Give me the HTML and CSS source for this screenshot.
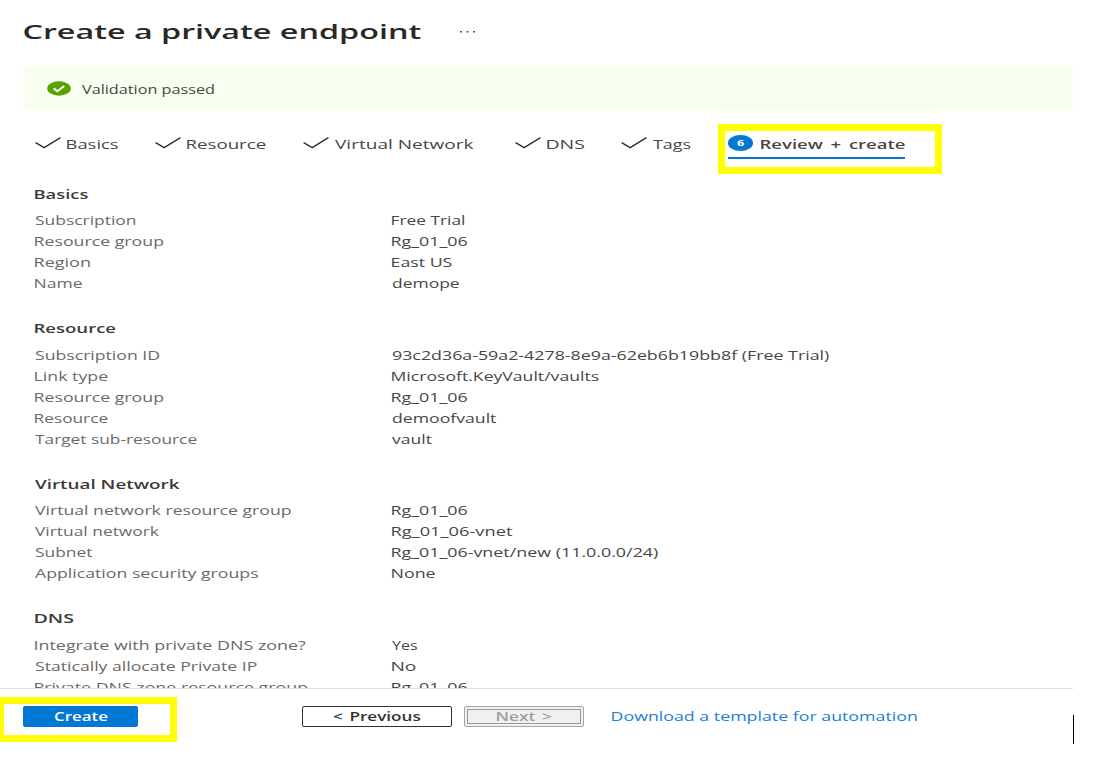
FILE: index.html
```html
<!DOCTYPE html>
<html lang="en">
<head>
<meta charset="utf-8">
<title>Create a private endpoint</title>
<link rel="stylesheet" href="styles.css">
</head>
<body>
<div class="page">
  <header class="title-bar">
    <h1 class="title"><span class="fit" data-w="397">Create a private endpoint</span></h1>
    <svg class="more" width="18" height="4" viewBox="0 0 18 4"><path d="M1 1h2v1.6h-2zM7.5 1h2v1.6h-2zM14 1h2v1.6h-2z" fill="#555"/></svg>
  </header>

  <div class="banner">
    <svg width="24" height="15" viewBox="0 0 24 15"><ellipse cx="12" cy="7.5" rx="11.8" ry="7.2" fill="#57a300"/><path d="M6.7 7.4l3.7 2.9 6.8-5.3" fill="none" stroke="#fff" stroke-width="2"/></svg>
    <span class="fit" data-w="132.5">Validation passed</span>
  </div>

  <nav class="tabs">
    <a class="tab tab-basics"><svg class="check" viewBox="0 0 26 12"><path d="M.6 5.6l8.6 5L25.4.6"/></svg><span class="fit" data-w="51.5">Basics</span></a>
    <a class="tab tab-resource"><svg class="check" viewBox="0 0 26 12"><path d="M.6 5.6l8.6 5L25.4.6"/></svg><span class="fit" data-w="79">Resource</span></a>
    <a class="tab tab-network"><svg class="check" viewBox="0 0 26 12"><path d="M.6 5.6l8.6 5L25.4.6"/></svg><span class="fit" data-w="139">Virtual Network</span></a>
    <a class="tab tab-dns"><svg class="check" viewBox="0 0 26 12"><path d="M.6 5.6l8.6 5L25.4.6"/></svg><span class="fit" data-w="38">DNS</span></a>
    <a class="tab tab-tags"><svg class="check" viewBox="0 0 26 12"><path d="M.6 5.6l8.6 5L25.4.6"/></svg><span class="fit" data-w="38">Tags</span></a>
    <div class="marker">
      <a class="tab-active"><span class="step"><span class="fit" data-w="8">6</span></span><span class="fit" data-w="144">Review + create</span></a>
    </div>
  </nav>

  <main class="summary">
    <section>
      <h2><span class="fit" data-w="53.5">Basics</span></h2>
      <dl>
        <dt><span class="fit" data-w="101">Subscription</span></dt><dd><span class="fit" data-w="72">Free Trial</span></dd>
        <dt><span class="fit" data-w="128.5">Resource group</span></dt><dd><span class="fit" data-w="76">Rg_01_06</span></dd>
        <dt><span class="fit" data-w="55.5">Region</span></dt><dd><span class="fit" data-w="59.5">East US</span></dd>
        <dt><span class="fit" data-w="48">Name</span></dt><dd><span class="fit" data-w="68">demope</span></dd>
      </dl>
    </section>
    <section>
      <h2><span class="fit" data-w="81">Resource</span></h2>
      <dl>
        <dt><span class="fit" data-w="124">Subscription ID</span></dt><dd><span class="fit" data-w="438">93c2d36a-59a2-4278-8e9a-62eb6b19bb8f (Free Trial)</span></dd>
        <dt><span class="fit" data-w="73.5">Link type</span></dt><dd><span class="fit" data-w="207.5">Microsoft.KeyVault/vaults</span></dd>
        <dt><span class="fit" data-w="128.5">Resource group</span></dt><dd><span class="fit" data-w="76">Rg_01_06</span></dd>
        <dt><span class="fit" data-w="73.5">Resource</span></dt><dd><span class="fit" data-w="104">demoofvault</span></dd>
        <dt><span class="fit" data-w="162.5">Target sub-resource</span></dt><dd><span class="fit" data-w="39.5">vault</span></dd>
      </dl>
    </section>
    <section>
      <h2><span class="fit" data-w="144.5">Virtual Network</span></h2>
      <dl>
        <dt><span class="fit" data-w="256">Virtual network resource group</span></dt><dd><span class="fit" data-w="76">Rg_01_06</span></dd>
        <dt><span class="fit" data-w="125">Virtual network</span></dt><dd><span class="fit" data-w="120">Rg_01_06-vnet</span></dd>
        <dt><span class="fit" data-w="57">Subnet</span></dt><dd><span class="fit" data-w="267">Rg_01_06-vnet/new (11.0.0.0/24)</span></dd>
        <dt><span class="fit" data-w="224">Application security groups</span></dt><dd><span class="fit" data-w="44">None</span></dd>
      </dl>
    </section>
    <section>
      <h2><span class="fit" data-w="39.5">DNS</span></h2>
      <dl>
        <dt><span class="fit" data-w="270.5">Integrate with private DNS zone?</span></dt><dd><span class="fit" data-w="26">Yes</span></dd>
        <dt><span class="fit" data-w="222">Statically allocate Private IP</span></dt><dd><span class="fit" data-w="24">No</span></dd>
        <dt><span class="fit" data-w="272.5">Private DNS zone resource group</span></dt><dd><span class="fit" data-w="76">Rg_01_06</span></dd>
      </dl>
    </section>
  </main>

  <footer class="actions">
    <div class="create-marker"><button class="btn create"><span class="fit" data-w="54">Create</span></button></div>
    <button class="btn previous"><span class="fit" data-w="88">&lt; Previous</span></button>
    <button class="btn next" disabled><span class="fit" data-w="55">Next &gt;</span></button>
    <a class="download"><span class="fit" data-w="305">Download a template for automation</span></a>
    <span class="caret"></span>
  </footer>
</div>
<script src="fit.js"></script>
</body>
</html>
```
FILE: styles.css
```css
* { box-sizing: border-box; }
body {
  margin: 0;
  background: #fff;
  color: #484644;
  font-family: "Open Sans", "Noto Sans", sans-serif;
  font-size: 12px;
  line-height: 21px;
}
.page {
  width: 1114px;
  height: 762px;
  overflow: hidden;
  display: flex;
  flex-direction: column;
}
.fit {
  display: inline-block;
  white-space: nowrap;
  transform-origin: 0 50%;
}
.title-bar {
  display: flex;
  align-items: center;
  height: 66px;
  padding: 0 0 4px 24px;
}
.title {
  margin: 0;
  font-size: 20.5px;
  font-weight: 600;
  line-height: 30px;
  color: #292827;
}
.more { margin: 2px 0 0 38px; }
.banner {
  display: flex;
  align-items: center;
  gap: 11px;
  width: 1050px;
  height: 44px;
  margin-left: 23px;
  padding-left: 24px;
  background: #f8ffef;
}
.banner .fit { margin-top: 2px; }
.tabs {
  display: flex;
  align-items: flex-start;
  height: 73px;
  padding: 14px 0 0 34.5px;
  font-size: 12.7px;
}
.tab {
  display: flex;
  gap: 6px;
  padding-top: 10px;
}
.tab-basics { width: 120.5px; }
.tab-resource { width: 148px; }
.tab-network { width: 211.5px; }
.tab-dns { width: 106.5px; }
.tab-tags { width: 97px; }
.check {
  flex: none;
  width: 26px;
  height: 12px;
  margin-top: 3px;
  fill: none;
  stroke: #323130;
  stroke-width: 1.4;
}
.marker {
  width: 224px;
  height: 50px;
  padding: 3px 0 0 3px;
  border: 7px solid #ff0;
}
.tab-active {
  display: flex;
  gap: 7.5px;
  width: 177px;
  height: 25px;
  border-bottom: 2px solid #0078d4;
  font-weight: 600;
  word-spacing: 2px;
}
.step {
  display: flex;
  align-items: center;
  justify-content: center;
  width: 25px;
  height: 15.5px;
  margin-top: 1px;
  border-radius: 50%;
  background: #0078d4;
  color: #fff;
  font-size: 9.5px;
  font-weight: 700;
}
.summary {
  height: 505px;
  padding: 1px 0 0 35px;
  overflow: hidden;
}
section { margin-bottom: 24px; }
h2 {
  margin: 0 0 5.4px;
  font-size: 12.2px;
  font-weight: 600;
  color: #3b3a39;
}
dl {
  display: grid;
  grid-template-columns: 356.5px 1fr;
  grid-auto-rows: 21px;
  margin: 0;
}
dt { color: #6b6967; }
dd { margin: 0; }
.actions {
  position: relative;
  display: flex;
  align-items: flex-start;
  height: 74px;
}
.actions::before {
  content: "";
  position: absolute;
  top: 0;
  left: 0;
  width: 1073px;
  height: 1px;
  background: #e1dfdd;
}
.create-marker {
  width: 177px;
  height: 45px;
  margin-top: 9px;
  padding: 2px 0 0 19px;
  border: 7px solid #ff0;
  border-left-width: 4px;
}
.btn {
  display: flex;
  align-items: center;
  justify-content: center;
  height: 21px;
  padding: 0;
  border-radius: 2px;
  font: 600 12px "Open Sans", "Noto Sans", sans-serif;
  word-spacing: 1.5px;
}
.create {
  width: 115px;
  border: 0;
  background: #0078d4;
  color: #fff;
}
.previous {
  width: 150px;
  margin: 18px 0 0 125px;
  border: 1px solid #323130;
  background: #fff;
  color: #323130;
}
.next {
  width: 120px;
  margin: 18px 0 0 12px;
  border: 1px solid #a8a8a8;
  outline: 1px solid #999;
  outline-offset: -4px;
  background: #f1f0ef;
  color: #a19f9d;
}
.download {
  margin: 18px 0 0 28px;
  color: #1a80d6;
  font-size: 12.3px;
}
.caret {
  position: absolute;
  left: 1073px;
  top: 27px;
  width: 1px;
  height: 29px;
  background: #000;
}
```
FILE: fit.js
```js
// Stretches each label horizontally so its drawn width equals data-w.
const ctx = document.createElement('canvas').getContext('2d');
document.querySelectorAll('.fit').forEach(el => {
  const cs = getComputedStyle(el);
  ctx.font = `${cs.fontWeight} ${cs.fontSize} ${cs.fontFamily}`;
  ctx.wordSpacing = cs.wordSpacing;
  const m = ctx.measureText(el.textContent);
  const w = Number(el.dataset.w);
  const k = w / (m.actualBoundingBoxRight + m.actualBoundingBoxLeft);
  const natural = m.width;
  el.style.transform = `translateX(${m.actualBoundingBoxLeft * k}px) scaleX(${k})`;
  el.style.width = `${natural}px`;
  el.style.marginRight = `${w - natural}px`;
});
```
